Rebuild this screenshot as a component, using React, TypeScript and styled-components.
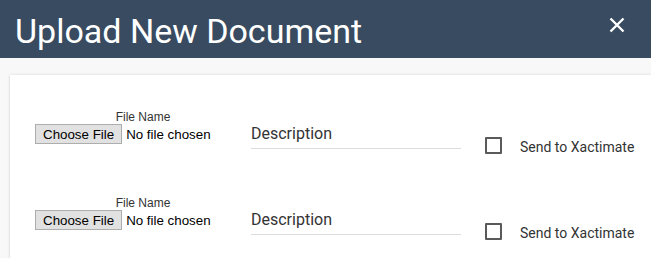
import React from "react";
import styled, { createGlobalStyle } from "styled-components";

const Global = createGlobalStyle`
  html, body { margin: 0; padding: 0; }
  body { background: #f8f8f8; overflow: hidden; font-family: Roboto, "Liberation Sans", sans-serif; }
`;

const Page = styled.div`
  width: 651px;
  height: 258px;
  overflow: hidden;
  background: #f8f8f8;
`;

const Header = styled.header`
  height: 58px;
  background: #384b60;
  display: flex;
  align-items: center;
  justify-content: space-between;
  padding: 0 26px 0 15px;
  box-sizing: border-box;
`;

const Title = styled.h1`
  margin: 0;
  font-family: Roboto, sans-serif;
  font-weight: 400;
  font-size: 34px;
  color: #ffffff;
  line-height: 1;
  padding-top: 3px;
`;

const Close = styled.button`
  border: 0;
  background: transparent;
  padding: 0;
  width: 16px;
  height: 16px;
  display: flex;
  cursor: pointer;
  margin-top: -8px;
`;

const Body = styled.div`
  padding: 17px 0 0 10px;
`;

const Card = styled.div`
  width: 700px;
  min-height: 200px;
  background: #fff;
  box-shadow: 0 0 3px rgba(0, 0, 0, 0.12), 0 1px 2px rgba(0, 0, 0, 0.08);
  padding-top: 33px;
`;

const Row = styled.div`
  display: flex;
  align-items: flex-start;
  height: 86px;
  padding-left: 25px;
`;

const FileCol = styled.div`
  width: 216px;
  display: flex;
  flex-direction: column;
`;

const FileLabel = styled.label`
  font-family: "Liberation Sans", Arial, sans-serif;
  font-size: 12px;
  color: #333;
  line-height: 14px;
  width: 216px;
  text-align: center;
  margin-top: 2px;
`;

const FileInput = styled.input`
  font-family: "Liberation Sans", Arial, sans-serif;
  font-size: 13.333px;
  color: #000;
  margin: 0;
  padding: 0;
  height: 21px;
  &::file-selector-button {
    font-family: "Liberation Sans", Arial, sans-serif;
    font-size: 13.333px;
    color: #000;
    height: 20px;
    padding: 0 7px;
    margin: 0 4px 0 0;
    background: #e1e1e1;
    border: 1px solid #adadad;
    border-radius: 0;
  }
`;

const DescField = styled.input`
  width: 210px;
  margin-top: 16px;
  border: 0;
  border-bottom: 1px solid #dcdcdc;
  padding: 0 0 5px 0;
  font-family: Roboto, sans-serif;
  font-size: 16px;
  line-height: 19px;
  color: #333;
  background: transparent;
  outline: none;
  &::placeholder { color: #333; opacity: 1; }
`;

const CheckWrap = styled.label`
  display: flex;
  align-items: center;
  margin-left: 24px;
  margin-top: 28px;
  cursor: pointer;
`;

const Box = styled.input`
  appearance: none;
  width: 17px;
  height: 17px;
  margin: 0;
  border: 2px solid #5a5a5a;
  border-radius: 1px;
  box-sizing: border-box;
  background: #fff;
`;

const CheckText = styled.span`
  font-family: Roboto, sans-serif;
  font-size: 14px;
  color: #333;
  margin-left: 18px;
  margin-top: 3px;
`;

function UploadRow() {
  return (
    <Row>
      <FileCol>
        <FileLabel>File Name</FileLabel>
        <FileInput type="file" />
      </FileCol>
      <DescField placeholder="Description" />
      <CheckWrap>
        <Box type="checkbox" />
        <CheckText>Send to Xactimate</CheckText>
      </CheckWrap>
    </Row>
  );
}

export default function App() {
  return (
    <Page>
      <Global />
      <Header>
        <Title>Upload New Document</Title>
        <Close aria-label="Close">
          <svg width="16" height="16" viewBox="0 0 16 16">
            <path d="M1.5 1.5L14.5 14.5M14.5 1.5L1.5 14.5" stroke="#fff" strokeWidth="2.4" strokeLinecap="butt" />
          </svg>
        </Close>
      </Header>
      <Body>
        <Card>
          <UploadRow />
          <UploadRow />
        </Card>
      </Body>
    </Page>
  );
}
